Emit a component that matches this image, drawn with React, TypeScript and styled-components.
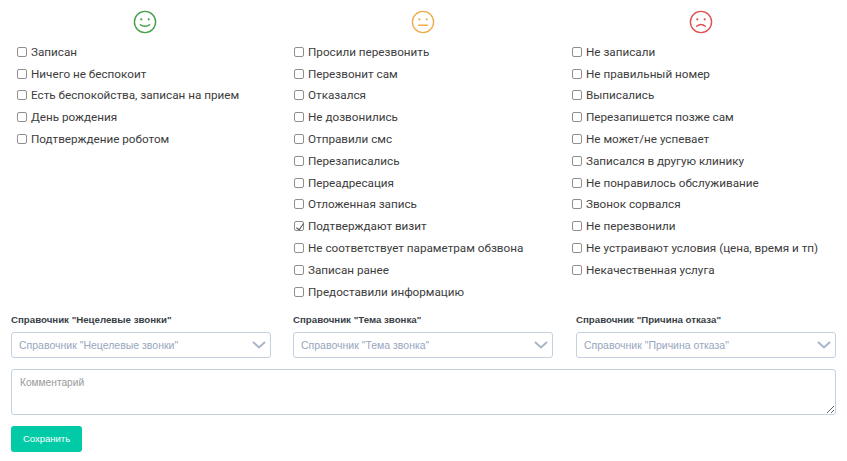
import React from 'react';
import styled, { createGlobalStyle } from 'styled-components';

const GlobalStyle = createGlobalStyle`
  html, body {
    margin: 0;
    padding: 0;
    background: #fff;
    font-family: Roboto, "Liberation Sans", sans-serif;
  }
`;

const Page = styled.div`
  width: 847px;
  height: 461px;
  box-sizing: border-box;
  padding: 10px 11px 0;
  overflow: hidden;
`;

const Columns = styled.div`
  display: grid;
  grid-template-columns: 277px 278px 1fr;
  padding-left: 6px;
`;

const Column = styled.div`
  display: flex;
  flex-direction: column;
`;

const FaceRow = styled.div<{ $shift: number }>`
  height: 25px;
  margin-bottom: 6px;
  padding-left: ${props => props.$shift}px;
`;

const OptionRow = styled.label`
  display: flex;
  align-items: center;
  height: 21.8px;
  font-size: 11.7px;
  color: #3c3c3c;
  white-space: nowrap;
`;

const CheckBox = styled.input.attrs({ type: 'checkbox' })`
  appearance: none;
  width: 10px;
  height: 10px;
  margin: 0 4px 0 0;
  border: 1px solid #8f8f8f;
  border-radius: 2px;
  background: #fff;
  position: relative;
  flex: none;

  &:checked::after {
    content: '';
    position: absolute;
    left: 3px;
    top: 0;
    width: 3px;
    height: 7px;
    border: solid #555;
    border-width: 0 1px 1px 0;
    transform: rotate(35deg);
  }
`;

const Selects = styled.div`
  display: grid;
  grid-template-columns: 282px 283px 260px;
  margin-top: 10.4px;
`;

const Field = styled.div`
  display: flex;
  flex-direction: column;
  width: 260px;
`;

const FieldLabel = styled.div`
  font-family: "Liberation Sans", Arial, sans-serif;
  font-size: 9.7px;
  font-weight: 700;
  line-height: 14px;
  height: 14px;
  margin-bottom: 5px;
  color: #3a3f47;
  white-space: nowrap;
`;

const SelectBox = styled.div`
  display: flex;
  align-items: center;
  justify-content: space-between;
  box-sizing: border-box;
  height: 26px;
  padding: 0 4px 0 7px;
  border: 1px solid #c3d0e0;
  border-radius: 3px;
  background: #fff;
  font-family: "Liberation Sans", Arial, sans-serif;
  font-size: 10.5px;
  color: #98a6bd;
`;

const Chevron = styled.svg`
  width: 14px;
  height: 8px;
  fill: none;
  stroke: #a9b6c8;
  stroke-width: 2;
`;

const Comment = styled.textarea`
  display: block;
  box-sizing: border-box;
  width: 825px;
  height: 46px;
  margin: 11px 0 0;
  padding: 7px 8px;
  border: 1px solid #c3d0e0;
  border-radius: 3px;
  background: #fff;
  font-family: "Liberation Sans", Arial, sans-serif;
  font-size: 10.2px;
  outline: none;

  &::placeholder {
    color: #9a9a9a;
    opacity: 1;
  }
`;

const SaveButton = styled.button`
  display: block;
  width: 71px;
  height: 26px;
  margin-top: 11px;
  padding: 0;
  border: none;
  border-radius: 3px;
  background: #00cba6;
  color: #fff;
  font-family: "Liberation Sans", Arial, sans-serif;
  font-size: 9.5px;
  cursor: pointer;
`;

const Face: React.FC<{ color: string; mood: 'good' | 'neutral' | 'bad' }> = ({ color, mood }) => (
  <svg width="24" height="24" viewBox="0 0 24 24" fill="none" stroke={color} strokeWidth="1.4">
    <circle cx="12" cy="12" r="10.6" />
    <circle cx="8.3" cy="9.3" r="1.1" fill={color} stroke="none" />
    <circle cx="15.7" cy="9.3" r="1.1" fill={color} stroke="none" />
    {mood === 'good' && <path d="M7.3 14.8c2.6 2 6.8 2 9.4 0" strokeLinecap="round" />}
    {mood === 'neutral' && <path d="M7.6 15.2h8.8" strokeLinecap="round" />}
    {mood === 'bad' && <path d="M7.6 16.2c2.6-2 6.2-2 8.8 0" strokeLinecap="round" />}
  </svg>
);

const columns = [
  {
    color: '#43a047',
    mood: 'good' as const,
    shift: 116,
    options: ['Записан', 'Ничего не беспокоит', 'Есть беспокойства, записан на прием', 'День рождения', 'Подтверждение роботом'],
  },
  {
    color: '#f0ad4e',
    mood: 'neutral' as const,
    shift: 117,
    options: [
      'Просили перезвонить',
      'Перезвонит сам',
      'Отказался',
      'Не дозвонились',
      'Отправили смс',
      'Перезаписались',
      'Переадресация',
      'Отложенная запись',
      'Подтверждают визит',
      'Не соответствует параметрам обзвона',
      'Записан ранее',
      'Предоставили информацию',
    ],
  },
  {
    color: '#e05050',
    mood: 'bad' as const,
    shift: 117,
    options: [
      'Не записали',
      'Не правильный номер',
      'Выписались',
      'Перезапишется позже сам',
      'Не может/не успевает',
      'Записался в другую клинику',
      'Не понравилось обслуживание',
      'Звонок сорвался',
      'Не перезвонили',
      'Не устраивают условия (цена, время и тп)',
      'Некачественная услуга',
    ],
  },
];

const directories = ['Справочник "Нецелевые звонки"', 'Справочник "Тема звонка"', 'Справочник "Причина отказа"'];

export default function App() {
  return (
    <Page>
      <GlobalStyle />
      <Columns>
        {columns.map(col => (
          <Column key={col.mood}>
            <FaceRow $shift={col.shift}>
              <Face color={col.color} mood={col.mood} />
            </FaceRow>
            {col.options.map(option => (
              <OptionRow key={option}>
                <CheckBox defaultChecked={option === 'Подтверждают визит'} />
                {option}
              </OptionRow>
            ))}
          </Column>
        ))}
      </Columns>
      <Selects>
        {directories.map(name => (
          <Field key={name}>
            <FieldLabel>{name}</FieldLabel>
            <SelectBox>
              {name}
              <Chevron viewBox="0 0 14 8">
                <path d="M1 1l6 5.5L13 1" />
              </Chevron>
            </SelectBox>
          </Field>
        ))}
      </Selects>
      <Comment placeholder="Комментарий" />
      <SaveButton>Сохранить</SaveButton>
    </Page>
  );
}
